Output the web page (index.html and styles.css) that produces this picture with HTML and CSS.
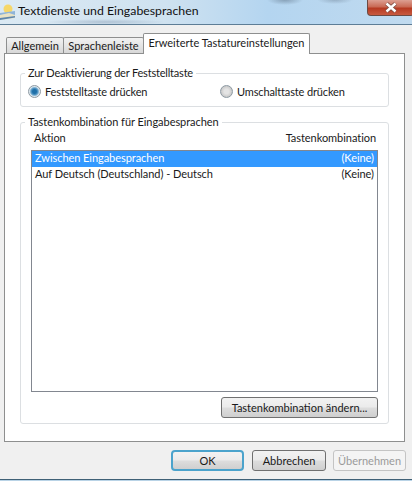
FILE: index.html
```html
<!DOCTYPE html>
<html lang="de">
    <head>
        <meta charset="UTF-8" />
        <title>Textdienste und Eingabesprachen</title>
        <link rel="stylesheet" href="styles.css">
    </head>
    <body>
        <div class="window">
            <div class="titlebar">
                <svg class="app-icon" width="15" height="18" viewBox="0 0 15 18">
                    <circle cx="8" cy="6" r="4.5" fill="#f6d768" />
                    <path d="M0 10 L15 8 L15 14 L0 16 Z" fill="#8fb4d8" />
                    <path d="M0 12 L9 10 L15 12 L15 15 L0 17 Z" fill="#e8e2c4" />
                    <path d="M0 15 L15 13 L15 14.500 L0 17 Z" fill="#5f87ad" />
                </svg>
                <span class="title">Textdienste und Eingabesprachen</span>
                <div class="close">
                    <svg width="14" height="11" viewBox="0 0 14 11">
                        <path d="M2.500 1.500 L11.500 9.500 M11.500 1.500 L2.500 9.500" stroke="#7a4a40" stroke-width="4" />
                        <path d="M2.500 1.500 L11.500 9.500 M11.500 1.500 L2.500 9.500" stroke="#fff" stroke-width="2.400" />
                    </svg>
                </div>
            </div>

            <div class="content">
                <div class="tabs">
                    <div class="tab tab-first">Allgemein</div>
                    <div class="tab tab-second">Sprachenleiste</div>
                    <div class="tab active">Erweiterte Tastatureinstellungen</div>
                </div>

                <div class="panel">
                    <fieldset class="group group-caps">
                        <legend>Zur Deaktivierung der Feststelltaste</legend>
                        <div class="radios">
                            <label class="radio-item">
                                <span class="radio checked"></span>
                                Feststelltaste drücken
                            </label>
                            <label class="radio-item">
                                <span class="radio"></span>
                                Umschalttaste drücken
                            </label>
                        </div>
                    </fieldset>

                    <fieldset class="group group-keys">
                        <legend>Tastenkombination für Eingabesprachen</legend>
                        <div class="list-head">
                            <span>Aktion</span>
                            <span>Tastenkombination</span>
                        </div>
                        <div class="list">
                            <div class="row selected">
                                <span>Zwischen Eingabesprachen</span>
                                <span>(Keine)</span>
                            </div>
                            <div class="row">
                                <span>Auf Deutsch (Deutschland) - Deutsch</span>
                                <span>(Keine)</span>
                            </div>
                        </div>
                        <div class="list-actions">
                            <button class="btn btn-change">Tastenkombination ändern...</button>
                        </div>
                    </fieldset>
                </div>

                <div class="footer">
                    <button class="btn btn-ok">OK</button>
                    <button class="btn btn-cancel">Abbrechen</button>
                    <button class="btn btn-apply" disabled>Übernehmen</button>
                </div>
            </div>
            <div class="bottom-edge"></div>
        </div>
    </body>
</html>
```

FILE: styles.css
```css
* {
    margin: 0;
    padding: 0;
    box-sizing: border-box;
}
body {
    font-family: Lato, Arial, sans-serif;
    font-size: 11px;
    color: #1a1a1a;
    background: #f0f0f0;
    overflow: hidden;
}

.window {
    display: flex;
    flex-direction: column;
    width: 412px;
    height: 481px;
}

.titlebar {
    position: relative;
    display: flex;
    align-items: center;
    flex: none;
    height: 25px;
    padding-bottom: 3px;
    border-bottom: 1px solid #5d7d96;
    background:
        radial-gradient(ellipse 18px 5px at 285px 0, rgba(90, 110, 130, 0.5), transparent),
        radial-gradient(ellipse 18px 4px at 335px 0, rgba(110, 130, 150, 0.45), transparent),
        radial-gradient(ellipse 60px 3px at 105px 22px, rgba(120, 140, 165, 0.4), transparent),
        linear-gradient(to right, #dbe9f3 0%, #cfe2f0 40%, #b4d5f0 65%, #c0daef 100%);
}
.app-icon {
    flex: none;
    margin-top: 2px;
}
.title {
    margin-left: 3px;
    font-size: 12.300px;
    color: #111;
}
.close {
    position: absolute;
    top: 0;
    left: 367px;
    width: 47px;
    height: 16px;
    display: flex;
    justify-content: center;
    align-items: center;
    border: 1px solid #6d4a42;
    border-top: none;
    border-radius: 0 0 4px 4px;
    background: linear-gradient(to bottom, #dc9f92 0%, #c96a55 45%, #b63a22 55%, #c85a40 100%);
}

.content {
    flex: 1;
    display: flex;
    flex-direction: column;
    padding: 8px 7px 0 4px;
}

.tabs {
    display: flex;
    align-items: flex-end;
    flex: none;
    height: 21px;
    padding-left: 2px;
    margin-bottom: -1px;
}
.tab {
    height: 17px;
    line-height: 16px;
    text-align: center;
    white-space: nowrap;
    border: 1px solid #8e8f8f;
    border-bottom: none;
    background: linear-gradient(to bottom, #f2f2f2, #d6d6d6);
    border-radius: 2px 2px 0 0;
}
.tab-first {
    width: 58px;
}
.tab-second {
    width: 81px;
    margin-left: -1px;
}
.tab.active {
    position: relative;
    width: 167px;
    height: 21px;
    padding-top: 2px;
    line-height: 14px;
    margin-left: -1px;
    background: #fff;
    z-index: 1;
}

.panel {
    flex: none;
    display: flex;
    flex-direction: column;
    gap: 8px;
    height: 389px;
    padding: 12px 15px 17px;
    background: #fff;
    border: 1px solid #8e8f8f;
}

.group {
    min-width: 0;
    border: 1px solid #dcdfe2;
    border-radius: 3px;
    padding: 0 10px;
}
.group legend {
    margin-left: -6px;
    padding: 0 3px;
    line-height: 14px;
}
.group-caps {
    flex: none;
    height: 41px;
    padding: 0 7px;
}
.group-caps legend {
    margin-left: -3px;
    letter-spacing: -0.200px;
}
.group-keys {
    flex: 1;
    letter-spacing: -0.050px;
}

.radios {
    display: flex;
    padding-top: 5px;
    letter-spacing: -0.140px;
}
.radio-item {
    display: flex;
    align-items: center;
    gap: 4px;
    flex: none;
    width: 192px;
}
.radio-item + .radio-item {
    width: 150px;
}
.radio {
    flex: none;
    width: 13px;
    height: 13px;
    border-radius: 50%;
    border: 1px solid #8d9aa3;
    background: radial-gradient(circle, #e4e4e4 30%, #c9c9c9 70%, #eee 100%);
}
.radio.checked {
    background: radial-gradient(circle, #1f6fa8 25%, #5b9cc8 45%, #dfe8ee 65%);
}

.list-head {
    display: flex;
    justify-content: space-between;
    padding: 2px 2px 0 3px;
    line-height: 14px;
}
.list {
    height: 242px;
    margin-top: 5px;
    border: 1px solid #828790;
    background: #fff;
}
.row {
    display: flex;
    justify-content: space-between;
    height: 15px;
    line-height: 14px;
    padding: 0 3px 0 3px;
}
.row.selected {
    height: 16px;
    background: #3399ff;
    color: #fff;
}
.list-actions {
    display: flex;
    justify-content: flex-end;
    margin-top: 5px;
}

.btn {
    height: 21px;
    font-family: inherit;
    font-size: 11px;
    color: #1a1a1a;
    border: 1px solid #707070;
    border-radius: 3px;
    background: linear-gradient(to bottom, #f2f2f2 0%, #ebebeb 48%, #dddddd 52%, #cfcfcf 100%);
}
.btn-change {
    width: 157px;
}

.footer {
    flex: 1;
    display: flex;
    justify-content: flex-end;
    align-items: flex-start;
    gap: 8px;
    padding-top: 8px;
    margin-right: -1px;
}
.btn-ok {
    width: 73px;
    border: 2px solid #4ba3cc;
    border-radius: 4px;
}
.btn-cancel {
    width: 74px;
}
.btn-apply {
    width: 73px;
    margin-left: -1px;
    color: #9a9a9a;
    border-color: #c4c4c4;
    background: #f4f4f4;
}

.bottom-edge {
    flex: none;
    height: 2px;
    border-top: 1px solid #3f6076;
    background: #b9d3e6;
}
```
